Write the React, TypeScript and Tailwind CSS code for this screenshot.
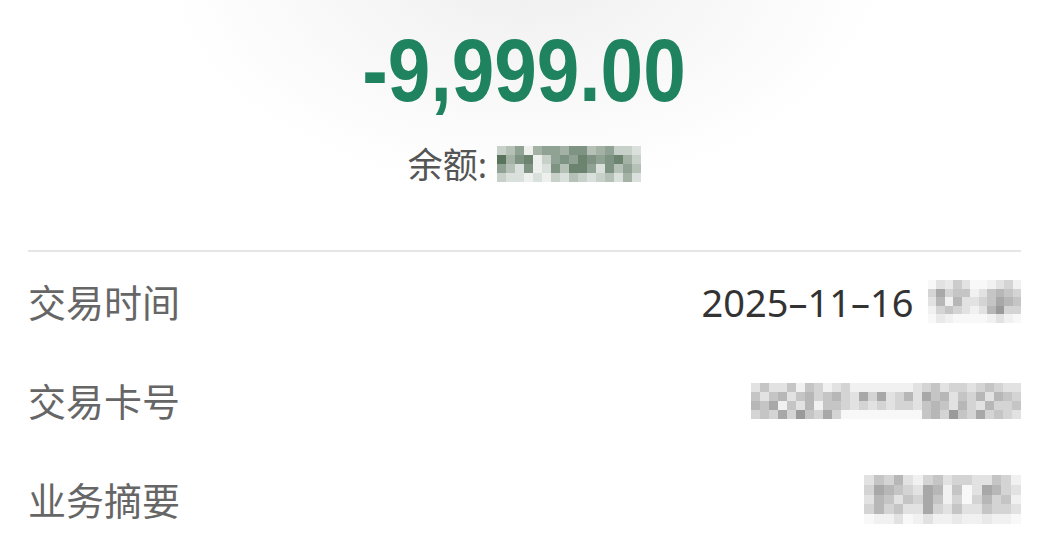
import React from 'react'

// pixelated (mosaic) stand-ins for the masked values
function Mosaic({ rows, cell, tint }: { rows: number[][]; cell: number; tint: 'green' | 'gray' }) {
  const shade = (v: number) => {
    if (tint === 'green') {
      const r = Math.round(255 - (255 - 70) * v)
      const g = Math.round(255 - (255 - 100) * v)
      const b = Math.round(255 - (255 - 75) * v)
      return `rgb(${r},${g},${b})`
    }
    const c = Math.round(255 - (255 - 110) * v)
    return `rgb(${c},${c},${c})`
  }
  return (
    <div className="flex flex-col">
      {rows.map((row, i) => (
        <div key={i} className="flex">
          {row.map((v, j) => (
            <div key={j} style={{ width: cell, height: cell, backgroundColor: shade(v) }} />
          ))}
        </div>
      ))}
    </div>
  )
}

const BALANCE = [
  [0.3, 0.4, 0.6, 0.1, 0.5, 0.6, 0.6, 0.5, 0.7, 0.7, 0.4, 0.5, 0.6, 0.3, 0.3, 0.2],
  [0.9, 0.5, 0.7, 0.8, 0.1, 0.3, 0.6, 0.7, 0.6, 0.8, 0.7, 0.6, 0.7, 0.8, 0.5, 0.3],
  [0.6, 0.4, 0.2, 0.7, 0.1, 0.2, 0.7, 0.4, 0.8, 0.8, 0.6, 0.2, 0.7, 0.4, 0.6, 0.4],
  [0.3, 0.2, 0.2, 0.1, 0.2, 0.1, 0.3, 0.2, 0.4, 0.3, 0.2, 0.3, 0.4, 0.2, 0.5, 0.2],
]

const TIME = [
  [0.05, 0.2, 0.15, 0.35, 0.2, 0.05, 0.05, 0.1, 0.2, 0.3, 0.1],
  [0.3, 0.6, 0.3, 0.4, 0.4, 0.1, 0.2, 0.4, 0.5, 0.4, 0.3],
  [0.2, 0.5, 0.1, 0.5, 0.2, 0.2, 0.3, 0.4, 0.6, 0.5, 0.4],
  [0.1, 0.3, 0.4, 0.3, 0.2, 0.1, 0.2, 0.5, 0.7, 0.3, 0.3],
  [0.05, 0.15, 0.1, 0.05, 0.05, 0.05, 0.05, 0.1, 0.2, 0.1, 0.05],
]

const CARD = [
  [0.2, 0.4, 0.2, 0.2, 0.4, 0.1, 0.4, 0.3, 0.1, 0.2, 0.3, 0.1, 0.1, 0.1, 0.1, 0.1, 0.1, 0.1, 0.2, 0.3, 0.4, 0.2, 0.3, 0.3, 0.2, 0.3, 0.4, 0.3, 0.2, 0.2],
  [0.4, 0.2, 0.4, 0.5, 0.2, 0.4, 0.5, 0.3, 0.4, 0.5, 0.3, 0.2, 0.6, 0.3, 0.6, 0.2, 0.3, 0.5, 0.2, 0.6, 0.4, 0.5, 0.2, 0.4, 0.3, 0.5, 0.2, 0.5, 0.4, 0.3],
  [0.5, 0.4, 0.6, 0.1, 0.4, 0.2, 0.5, 0.1, 0.4, 0.4, 0.3, 0.2, 0.3, 0.2, 0.3, 0.2, 0.3, 0.3, 0.2, 0.4, 0.5, 0.4, 0.2, 0.5, 0.3, 0.2, 0.5, 0.3, 0.3, 0.4],
  [0.3, 0.4, 0.3, 0.6, 0.3, 0.7, 0.4, 0.3, 0.6, 0.3, 0.05, 0.05, 0.05, 0.05, 0.05, 0.05, 0.05, 0.05, 0.05, 0.4, 0.5, 0.3, 0.7, 0.4, 0.3, 0.6, 0.3, 0.4, 0.3, 0.2],
]

const SUMMARY = [
  [0.2, 0.4, 0.3, 0.5, 0.2, 0.1, 0.3, 0.4, 0.2, 0.3, 0.3, 0.2, 0.2, 0.4, 0.3, 0.1],
  [0.3, 0.6, 0.5, 0.4, 0.3, 0.2, 0.6, 0.5, 0.1, 0.4, 0.05, 0.2, 0.6, 0.5, 0.3, 0.2],
  [0.2, 0.5, 0.4, 0.2, 0.4, 0.3, 0.6, 0.4, 0.1, 0.3, 0.05, 0.3, 0.5, 0.3, 0.4, 0.1],
  [0.3, 0.5, 0.3, 0.4, 0.2, 0.2, 0.6, 0.3, 0.2, 0.4, 0.2, 0.2, 0.4, 0.3, 0.3, 0.2],
  [0.05, 0.1, 0.1, 0.2, 0.05, 0.1, 0.2, 0.1, 0.1, 0.15, 0.1, 0.1, 0.15, 0.1, 0.1, 0.05],
]

function Row({ label, children }: { label: string; children: React.ReactNode }) {
  return (
    <div className="flex items-center justify-between h-[99px]">
      <span className="text-[38px] text-[#666] leading-none">{label}</span>
      <div className="flex items-center">{children}</div>
    </div>
  )
}

export default function App() {
  return (
    <div
      className="w-[1049px] h-[557px] overflow-hidden bg-white bg-[radial-gradient(ellipse_360px_230px_at_525px_-40px,#eeeeee_0%,#f6f6f6_45%,#ffffff_100%)]"
      style={{ fontFamily: '"Noto Sans", "Noto Sans CJK SC", sans-serif' }}
    >
      <div className="flex flex-col items-center pt-[24px]">
        <div
          className="text-[89px] leading-[92px] font-bold text-[#1f8360] scale-x-[0.86]"
          style={{ fontFamily: '"Liberation Sans", Arial, sans-serif' }}
        >
          -9,999.00
        </div>
        <div className="flex items-center mt-[30px] h-[36px]">
          <span className="text-[35px] text-[#555] leading-none">余额:</span>
          <div className="ml-[10px]">
            <Mosaic rows={BALANCE} cell={9} tint="green" />
          </div>
        </div>
      </div>

      <div className="mx-[28px] mt-[68px] border-t-2 border-[#e6e6e6]">
        <Row label="交易时间">
          <span className="text-[38px] text-[#333] leading-none">2025–11–16</span>
          <div className="ml-[14px]">
            <Mosaic rows={TIME} cell={8.5} tint="gray" />
          </div>
        </Row>
        <Row label="交易卡号">
          <Mosaic rows={CARD} cell={9} tint="gray" />
        </Row>
        <Row label="业务摘要">
          <Mosaic rows={SUMMARY} cell={9.8} tint="gray" />
        </Row>
      </div>
    </div>
  )
}
